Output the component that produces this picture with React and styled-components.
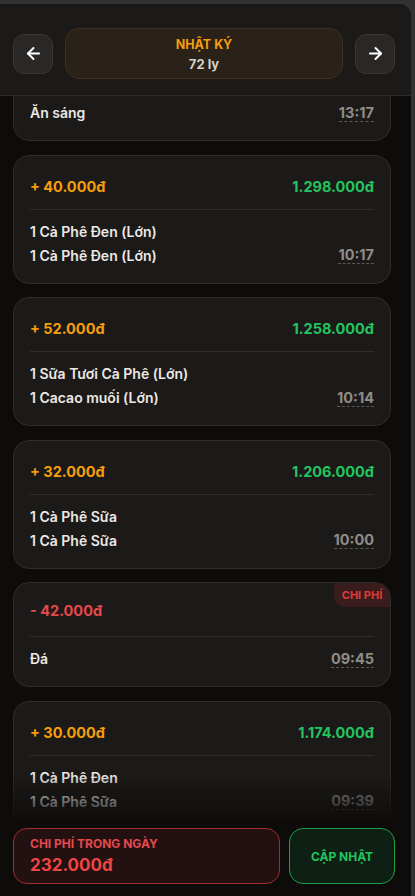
import { useLayoutEffect, useRef } from "react";
import styled, { createGlobalStyle } from "styled-components";
import { ArrowLeft, ArrowRight } from "lucide-react";

const GlobalStyle = createGlobalStyle`
    html, body {
        margin: 0;
        height: 100%;
        background: #323232;
        font-family: Inter, "Noto Sans", sans-serif;
        overflow: hidden;
    }
    #root { height: 100%; }
`

const Panel = styled.div`
    margin-top: 4px;
    width: 411px;
    height: 892px;
    background: #0d0c0b;
    border-top-right-radius: 12px;
    display: flex;
    flex-direction: column;
    overflow: hidden;
`

const Header = styled.header`
    flex: none;
    height: 92px;
    background: #1c1a18;
    border-bottom: 1px solid #2c2a27;
    display: flex;
    align-items: center;
    gap: 12px;
    padding: 24px 16px 16px 13px;
    box-sizing: border-box;
`

const NavButton = styled.button`
    flex: none;
    width: 40px;
    height: 40px;
    border-radius: 11px;
    background: #2a2826;
    border: 1px solid #3a3835;
    color: #fff;
    display: flex;
    align-items: center;
    justify-content: center;
    padding: 0;
`

const TitlePill = styled.div`
    flex: 1;
    height: 51px;
    border-radius: 14px;
    background: #2a2119;
    border: 1px solid #3e301c;
    display: flex;
    flex-direction: column;
    align-items: center;
    padding-top: 8px;
    gap: 3px;
    box-sizing: border-box;
`

const Title = styled.div`
    color: #f59e0b;
    font-size: 12.5px;
    font-weight: 700;
    line-height: 16px;
`

const Subtitle = styled.div`
    color: #d4d1cc;
    font-size: 13px;
    font-weight: 700;
    line-height: 16px;
`

const ListArea = styled.div`
    flex: 1;
    min-height: 0;
    position: relative;
`

const Scroller = styled.div`
    height: 100%;
    overflow-y: auto;
    box-sizing: border-box;
    padding: 13px 20px 40px 13px;
    display: flex;
    flex-direction: column;
    gap: 13.5px;
    scrollbar-width: thin;
    scrollbar-color: #3a3936 #0d0c0b;
`

const Fade = styled.div`
    position: absolute;
    left: 0;
    right: 4px;
    bottom: 0;
    height: 48px;
    pointer-events: none;
    background: linear-gradient(to bottom, rgba(13, 12, 11, 0), rgba(13, 12, 11, 0.96));
`

const Card = styled.div`
    flex: none;
    position: relative;
    background: #1c1a19;
    border: 1px solid #2f2d2b;
    border-radius: 16px;
    padding: ${p => (p.$expense ? "18px" : "21px")} 16px 17px;
    overflow: hidden;
`

const Badge = styled.div`
    position: absolute;
    top: 0;
    right: 0;
    width: 56px;
    height: 24px;
    background: #3a1c1c;
    color: #e03b3b;
    font-size: 11px;
    font-weight: 700;
    display: flex;
    align-items: center;
    justify-content: center;
    border-bottom-left-radius: 12px;
`

const TopRow = styled.div`
    display: flex;
    justify-content: space-between;
    align-items: center;
    height: 19px;
    font-size: 14.5px;
    font-weight: 700;
`

const Amount = styled.span`
    color: ${p => (p.$expense ? "#e5484d" : "#f59e0b")};
`

const Total = styled.span`
    color: #22c55e;
`

const Divider = styled.div`
    height: 1px;
    background: #2f2d2b;
    margin: ${p => (p.$expense ? "16px" : "13px")} 0 11px;
`

const Items = styled.div`
    display: flex;
    flex-direction: column;
    gap: 3px;
`

const ItemRow = styled.div`
    display: flex;
    justify-content: space-between;
    align-items: center;
    height: 21px;
`

const ItemName = styled.span`
    color: #ebe8e4;
    font-size: 14px;
    font-weight: 600;
`

const Time = styled.span`
    color: #8f8c88;
    font-size: 14.5px;
    font-weight: 700;
    line-height: 17px;
    border-bottom: 1px dashed #5a5855;
`

const Footer = styled.footer`
    flex: none;
    display: flex;
    gap: 9px;
    padding: 6px 16px 12px 13px;
`

const DayCost = styled.div`
    flex: 1;
    height: 56px;
    box-sizing: border-box;
    border-radius: 14px;
    background: #231010;
    border: 1px solid #a32d2d;
    padding: 0 16px;
    display: flex;
    flex-direction: column;
    justify-content: center;
    gap: 2px;
`

const DayCostLabel = styled.div`
    color: #e5484d;
    font-size: 12px;
    font-weight: 700;
    line-height: 16px;
`

const DayCostValue = styled.div`
    color: #ef4444;
    font-size: 17px;
    font-weight: 700;
    line-height: 22px;
`

const UpdateButton = styled.button`
    flex: none;
    width: 106px;
    height: 56px;
    border-radius: 14px;
    background: #0e1f13;
    border: 1px solid #1f9d4b;
    color: #22c55e;
    font-family: inherit;
    font-size: 12px;
    font-weight: 700;
`

const entries = [
    { expense: true, amount: "- 25.000đ", items: ["Ăn sáng"], time: "13:17" },
    { amount: "+ 40.000đ", total: "1.298.000đ", items: ["1 Cà Phê Đen (Lớn)", "1 Cà Phê Đen (Lớn)"], time: "10:17" },
    { amount: "+ 52.000đ", total: "1.258.000đ", items: ["1 Sữa Tươi Cà Phê (Lớn)", "1 Cacao muối (Lớn)"], time: "10:14" },
    { amount: "+ 32.000đ", total: "1.206.000đ", items: ["1 Cà Phê Sữa", "1 Cà Phê Sữa"], time: "10:00" },
    { expense: true, amount: "- 42.000đ", items: ["Đá"], time: "09:45" },
    { amount: "+ 30.000đ", total: "1.174.000đ", items: ["1 Cà Phê Đen", "1 Cà Phê Sữa"], time: "09:39" },
    { amount: "+ 16.000đ", total: "1.144.000đ", items: ["1 Cà Phê Sữa"], time: "09:21" },
    { amount: "+ 30.000đ", total: "1.128.000đ", items: ["1 Cà Phê Đen", "1 Cà Phê Sữa"], time: "09:05" },
    { amount: "+ 20.000đ", total: "1.098.000đ", items: ["1 Cà Phê Đen (Lớn)"], time: "08:47" },
    { amount: "+ 32.000đ", total: "1.078.000đ", items: ["1 Cà Phê Sữa", "1 Cà Phê Sữa"], time: "08:30" },
    { amount: "+ 26.000đ", total: "1.046.000đ", items: ["1 Sữa Tươi Cà Phê (Lớn)"], time: "08:12" },
    { amount: "+ 14.000đ", total: "1.020.000đ", items: ["1 Cà Phê Đen"], time: "07:58" },
    { amount: "+ 30.000đ", total: "1.006.000đ", items: ["1 Cà Phê Đen", "1 Cà Phê Sữa"], time: "07:40" },
    { amount: "+ 16.000đ", total: "976.000đ", items: ["1 Cà Phê Sữa"], time: "07:22" },
]

function EntryCard({ entry }) {
    const { expense, amount, total, items, time } = entry
    return (
        <Card $expense={expense}>
            {expense && <Badge>CHI PHÍ</Badge>}
            <TopRow>
                <Amount $expense={expense}>{amount}</Amount>
                {total && <Total>{total}</Total>}
            </TopRow>
            <Divider $expense={expense} />
            <Items>
                {items.map((name, i) => (
                    <ItemRow key={i}>
                        <ItemName>{name}</ItemName>
                        {i === items.length - 1 && <Time>{time}</Time>}
                    </ItemRow>
                ))}
            </Items>
        </Card>
    )
}

export default function App() {
    const scrollRef = useRef(null)

    useLayoutEffect(() => {
        if (scrollRef.current) scrollRef.current.scrollTop = 73
    }, [])

    return (
        <>
            <GlobalStyle />
            <Panel>
                <Header>
                    <NavButton aria-label="Trước">
                        <ArrowLeft size={19} strokeWidth={2.5} />
                    </NavButton>
                    <TitlePill>
                        <Title>NHẬT KÝ</Title>
                        <Subtitle>72 ly</Subtitle>
                    </TitlePill>
                    <NavButton aria-label="Sau">
                        <ArrowRight size={19} strokeWidth={2.5} />
                    </NavButton>
                </Header>
                <ListArea>
                    <Scroller ref={scrollRef}>
                        {entries.map((entry, i) => (
                            <EntryCard key={i} entry={entry} />
                        ))}
                    </Scroller>
                    <Fade />
                </ListArea>
                <Footer>
                    <DayCost>
                        <DayCostLabel>CHI PHÍ TRONG NGÀY</DayCostLabel>
                        <DayCostValue>232.000đ</DayCostValue>
                    </DayCost>
                    <UpdateButton>CẬP NHẬT</UpdateButton>
                </Footer>
            </Panel>
        </>
    )
}
